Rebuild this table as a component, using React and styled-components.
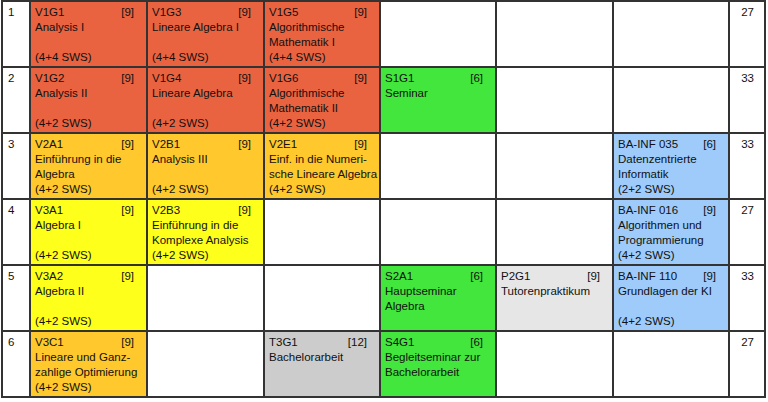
import React from 'react';
import styled, { createGlobalStyle } from 'styled-components';

const GlobalStyle = createGlobalStyle`
  body {
    margin: 0;
    background: #fff;
    font-family: "Liberation Sans", Arial, sans-serif;
  }
`;

const colors = {
  red: '#ea6340',
  orange: '#ffc82c',
  yellow: '#ffff1c',
  green: '#42e63c',
  blue: '#9ecbfa',
  light: '#e6e6e6',
  gray: '#cccccc',
  none: '#ffffff'
};

const Grid = styled.div`
  display: grid;
  grid-template-columns: 26px 115px 115px 114px 114px 115px 114px 34px;
  grid-auto-rows: 64px;
  gap: 2px;
  padding: 2px;
  margin: 0 0 0 1px;
  width: max-content;
  background: #333;
  font-size: 11.5px;
  line-height: 15px;
  color: #111;
`;

const NumCell = styled.div`
  background: #fff;
  padding: 3px 0 0 5px;
`;

const SumCell = styled.div`
  background: #fff;
  padding: 3px 10px 0 0;
  text-align: right;
`;

const Course = styled.div`
  background: ${(p) => colors[p.$tone]};
  padding: 3px 12px 1px 4px;
  display: flex;
  flex-direction: column;
  white-space: nowrap;
`;

const Head = styled.div`
  display: flex;
  justify-content: space-between;
`;

const Sws = styled.div`
  margin-top: auto;
`;

const X = null;

const rows = [
  {
    n: 1, sum: 27, cells: [
      { tone: 'red', code: 'V1G1', cr: 9, title: ['Analysis I'], sws: '4+4' },
      { tone: 'red', code: 'V1G3', cr: 9, title: ['Lineare Algebra I'], sws: '4+4' },
      { tone: 'red', code: 'V1G5', cr: 9, title: ['Algorithmische', 'Mathematik I'], sws: '4+4' },
      X, X, X
    ]
  },
  {
    n: 2, sum: 33, cells: [
      { tone: 'red', code: 'V1G2', cr: 9, title: ['Analysis II'], sws: '4+2' },
      { tone: 'red', code: 'V1G4', cr: 9, title: ['Lineare Algebra'], sws: '4+2' },
      { tone: 'red', code: 'V1G6', cr: 9, title: ['Algorithmische', 'Mathematik II'], sws: '4+2' },
      { tone: 'green', code: 'S1G1', cr: 6, title: ['Seminar'] },
      X, X
    ]
  },
  {
    n: 3, sum: 33, cells: [
      { tone: 'orange', code: 'V2A1', cr: 9, title: ['Einführung in die', 'Algebra'], sws: '4+2' },
      { tone: 'orange', code: 'V2B1', cr: 9, title: ['Analysis III'], sws: '4+2' },
      { tone: 'orange', code: 'V2E1', cr: 9, title: ['Einf. in die Numeri-', 'sche Lineare Algebra'], sws: '4+2' },
      X, X,
      { tone: 'blue', code: 'BA-INF 035', cr: 6, title: ['Datenzentrierte', 'Informatik'], sws: '2+2' }
    ]
  },
  {
    n: 4, sum: 27, cells: [
      { tone: 'yellow', code: 'V3A1', cr: 9, title: ['Algebra I'], sws: '4+2' },
      { tone: 'yellow', code: 'V2B3', cr: 9, title: ['Einführung in die', 'Komplexe Analysis'], sws: '4+2' },
      X, X, X,
      { tone: 'blue', code: 'BA-INF 016', cr: 9, title: ['Algorithmen und', 'Programmierung'], sws: '4+2' }
    ]
  },
  {
    n: 5, sum: 33, cells: [
      { tone: 'yellow', code: 'V3A2', cr: 9, title: ['Algebra II'], sws: '4+2' },
      X, X,
      { tone: 'green', code: 'S2A1', cr: 6, title: ['Hauptseminar', 'Algebra'] },
      { tone: 'light', code: 'P2G1', cr: 9, title: ['Tutorenpraktikum'] },
      { tone: 'blue', code: 'BA-INF 110', cr: 9, title: ['Grundlagen der KI'], sws: '4+2' }
    ]
  },
  {
    n: 6, sum: 27, cells: [
      { tone: 'orange', code: 'V3C1', cr: 9, title: ['Lineare und Ganz-', 'zahlige Optimierung'], sws: '4+2' },
      X,
      { tone: 'gray', code: 'T3G1', cr: 12, title: ['Bachelorarbeit'] },
      { tone: 'green', code: 'S4G1', cr: 6, title: ['Begleitseminar zur', 'Bachelorarbeit'] },
      X, X
    ]
  }
];

const CourseCell = ({ c }) => {
  if (!c) return <Course $tone="none" />;
  return (
    <Course $tone={c.tone}>
      <Head>
        <span>{c.code}</span>
        <span>[{c.cr}]</span>
      </Head>
      {c.title.map((t) => (
        <div key={t}>{t}</div>
      ))}
      {c.sws && <Sws>({c.sws} SWS)</Sws>}
    </Course>
  );
};

export default function App() {
  return (
    <>
      <GlobalStyle />
      <Grid>
        {rows.map((r) => (
          <React.Fragment key={r.n}>
            <NumCell>{r.n}</NumCell>
            {r.cells.map((c, i) => (
              <CourseCell key={i} c={c} />
            ))}
            <SumCell>{r.sum}</SumCell>
          </React.Fragment>
        ))}
      </Grid>
    </>
  );
}
